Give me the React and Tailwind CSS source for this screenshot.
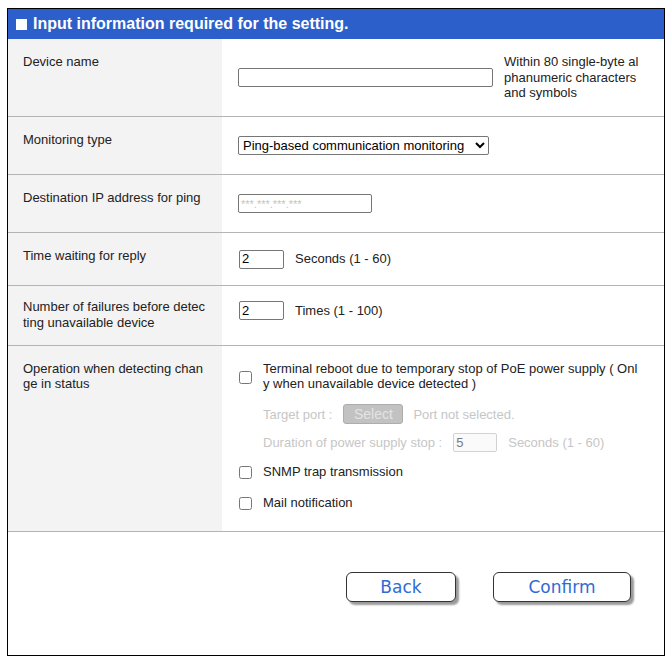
import React from 'react';

const Label = ({ children, className = '' }) => (
  <div className={`w-[214px] shrink-0 bg-[#f3f3f3] pl-[15px] pr-[15px] ${className}`}>
    <div className="w-[184px] break-all text-[13px] leading-[15px] text-[#222]">{children}</div>
  </div>
);

const Row = ({ height, children }) => (
  <div className={`flex border-b border-[#b4b4b4] ${height}`}>{children}</div>
);

const textInput = 'h-[19px] border border-[#767676] rounded-[2px] bg-white px-[2px] text-[13px] text-black outline-none';

const App = () => {
  return (
    <div className="bg-white pt-[8px] pl-[7px] pb-[6px]" style={{ fontFamily: '"Liberation Sans", Arial, sans-serif' }}>
      <div className="flex h-[648px] w-[658px] flex-col border border-black">
        {/* Header */}
        <div className="flex h-[30px] items-center bg-[#2c5fca] pl-[8px] text-white">
          <span className="mr-[6px] h-[11px] w-[11px] bg-white"></span>
          <span className="text-[16px] font-bold">Input information required for the setting.</span>
        </div>

        {/* Device name */}
        <Row height="h-[78px]">
          <Label className="pt-[15px]">Device name</Label>
          <div className="flex flex-1 items-center pl-[16px]">
            <input type="text" className={`${textInput} w-[255px]`} />
            <div className="ml-[11px] w-[138px] break-all text-[13px] leading-[15.5px] text-[#222]">
              Within 80 single-byte alphanumeric characters and symbols
            </div>
          </div>
        </Row>

        {/* Monitoring type */}
        <Row height="h-[58px]">
          <Label className="pt-[15px]">Monitoring type</Label>
          <div className="flex flex-1 items-center pl-[16px]">
            <select
              defaultValue="ping"
              className="h-[19px] w-[251px] rounded-[2px] border border-[#767676] bg-white text-[13px] text-black"
            >
              <option value="ping">Ping-based communication monitoring</option>
            </select>
          </div>
        </Row>

        {/* Destination IP */}
        <Row height="h-[58px]">
          <Label className="pt-[15px]">Destination IP address for ping</Label>
          <div className="flex flex-1 items-center pl-[16px]">
            <input
              type="text"
              placeholder="***.***.***.***"
              className="h-[19px] w-[134px] rounded-[2px] border border-[#767676] bg-white px-[2px] text-[11px] outline-none placeholder:text-[#c4c4c4]"
            />
          </div>
        </Row>

        {/* Time waiting */}
        <Row height="h-[53px]">
          <Label className="pt-[15px]">Time waiting for reply</Label>
          <div className="flex flex-1 items-center pl-[17px] text-[13px] text-[#222]">
            <input type="text" defaultValue="2" className={`${textInput} w-[45px]`} />
            <span className="ml-[11px]">Seconds (1 - 60)</span>
          </div>
        </Row>

        {/* Failures */}
        <Row height="h-[60px]">
          <Label className="pt-[13px] [&>div]:leading-[16px]">Number of failures before detecting unavailable device</Label>
          <div className="flex flex-1 items-start pl-[17px] pt-[15px] text-[13px] text-[#222]">
            <input type="text" defaultValue="2" className={`${textInput} w-[45px]`} />
            <span className="ml-[11px] leading-[19px]">Times (1 - 100)</span>
          </div>
        </Row>

        {/* Operation */}
        <Row height="h-[186px]">
          <Label className="pt-[15px]">Operation when detecting change in status</Label>
          <div className="flex flex-1 flex-col pl-[17px] pt-[15px] text-[13px] leading-[15px] text-[#222]">
            <div className="flex items-center">
              <input type="checkbox" className="mt-[2px] h-[13px] w-[13px] shrink-0" />
              <span className="ml-[11px] w-[379px] break-all">
                Terminal reboot due to temporary stop of PoE power supply ( Only when unavailable device detected )
              </span>
            </div>
            <div className="ml-[24px] mt-[13px] flex h-[20px] items-center text-[#c6c6c6]">
              <span>Target port :</span>
              <button
                type="button"
                disabled
                className="ml-[11px] h-[20px] w-[60px] rounded-[3px] border border-[#adadad] bg-[#c2c2c2] text-[14px] text-[#e4e4e4]"
              >
                Select
              </button>
              <span className="ml-[10px]">Port not selected.</span>
            </div>
            <div className="ml-[24px] mt-[9px] flex h-[19px] items-center text-[#c6c6c6]">
              <span>Duration of power supply stop :</span>
              <input
                type="text"
                disabled
                defaultValue="5"
                className="ml-[11px] h-[19px] w-[44px] rounded-[2px] border border-[#d2d2d2] bg-[#fafafa] px-[2px] text-[13px] text-[#7a7a7a]"
              />
              <span className="ml-[11px]">Seconds (1 - 60)</span>
            </div>
            <div className="mt-[12px] flex items-center">
              <input type="checkbox" className="mt-[2px] h-[13px] w-[13px] shrink-0" />
              <span className="ml-[11px]">SNMP trap transmission</span>
            </div>
            <div className="mt-[16px] flex items-center">
              <input type="checkbox" className="mt-[2px] h-[13px] w-[13px] shrink-0" />
              <span className="ml-[11px]">Mail notification</span>
            </div>
          </div>
        </Row>

        {/* Buttons */}
        <div className="flex flex-1 items-start gap-[37px] pl-[338px] pt-[40px]" style={{ fontFamily: '"DejaVu Sans", Verdana, sans-serif' }}>
          <button
            type="button"
            className="h-[30px] w-[110px] rounded-[6px] border border-[#333] bg-white pt-[2px] text-[17px] text-[#2f6bd6] shadow-[3px_3px_2px_#9a9a9a]"
          >
            Back
          </button>
          <button
            type="button"
            className="h-[30px] w-[138px] rounded-[6px] border border-[#333] bg-white pt-[2px] text-[17px] text-[#2f6bd6] shadow-[3px_3px_2px_#9a9a9a]"
          >
            Confirm
          </button>
        </div>
      </div>
    </div>
  );
};

export default App;
